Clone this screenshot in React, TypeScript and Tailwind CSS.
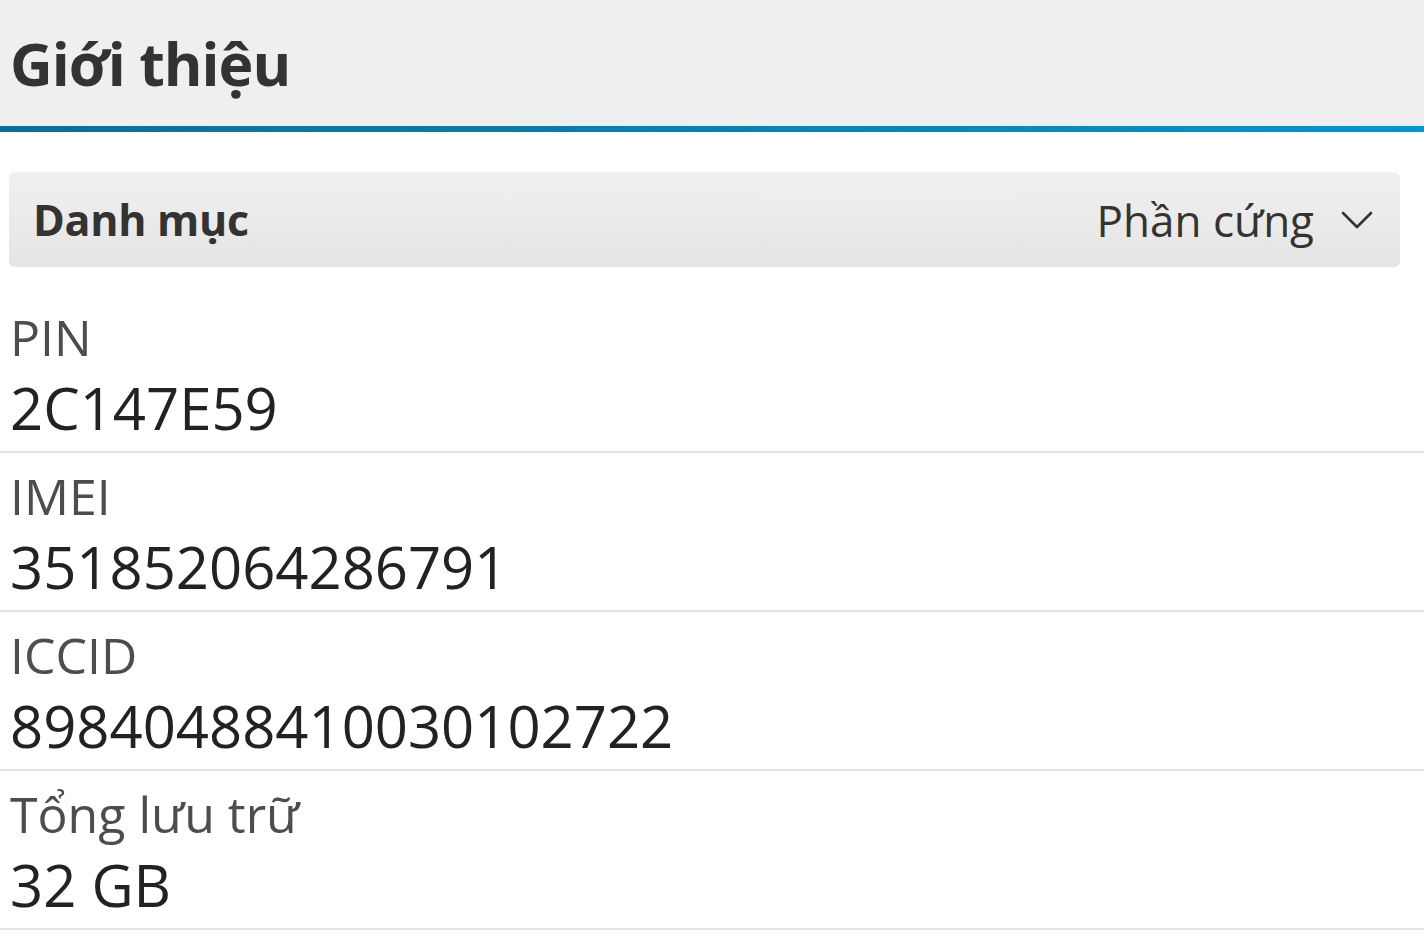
import React from "react";

const rows = [
  { label: "PIN", value: "2C147E59" },
  { label: "IMEI", value: "351852064286791" },
  { label: "ICCID", value: "89840488410030102722" },
  { label: "Tổng lưu trữ", value: "32 GB" },
];

function Chevron() {
  return (
    <svg width="34" height="22" viewBox="0 0 34 22" fill="none" className="shrink-0">
      <path d="M3 4 L17 18 L31 4" stroke="#333333" strokeWidth="2.6" strokeLinecap="round" strokeLinejoin="round" />
    </svg>
  );
}

export default function App() {
  return (
    <div className="min-h-[942px] w-full bg-white font-['Open_Sans',sans-serif]">
      <header className="flex h-[126px] items-center bg-[#efefef] px-[10px]">
        <h1 className="text-[59px] font-bold leading-none tracking-[-1px] text-[#333333]">
          Giới thiệu
        </h1>
      </header>
      <div className="h-[6px] bg-gradient-to-r from-[#0a6f9b] to-[#0096cf]" />

      <div className="mt-[40px] ml-[9px] mr-[24px] flex h-[95px] items-center justify-between rounded-[6px] bg-gradient-to-b from-[#f0f0f0] to-[#e5e5e5] pl-[24px] pr-[26px]">
        <span className="text-[43px] font-bold leading-none tracking-[-0.3px] text-[#333333]">Danh mục</span>
        <div className="flex items-center gap-[26px]">
          <span className="text-[44px] leading-none text-[#333333]">Phần cứng</span>
          <Chevron />
        </div>
      </div>

      <div className="mt-[27px]">
        {rows.map((r) => (
          <div key={r.label} className="border-b-2 border-[#e3e3e3] px-[10px] pt-[18px] pb-[14px]">
            <div className="text-[50px] leading-[50px] text-[#4d4d4d]">{r.label}</div>
            <div className="mt-[17px] text-[58px] leading-[58px] text-[#222222]">{r.value}</div>
          </div>
        ))}
      </div>
    </div>
  );
}
